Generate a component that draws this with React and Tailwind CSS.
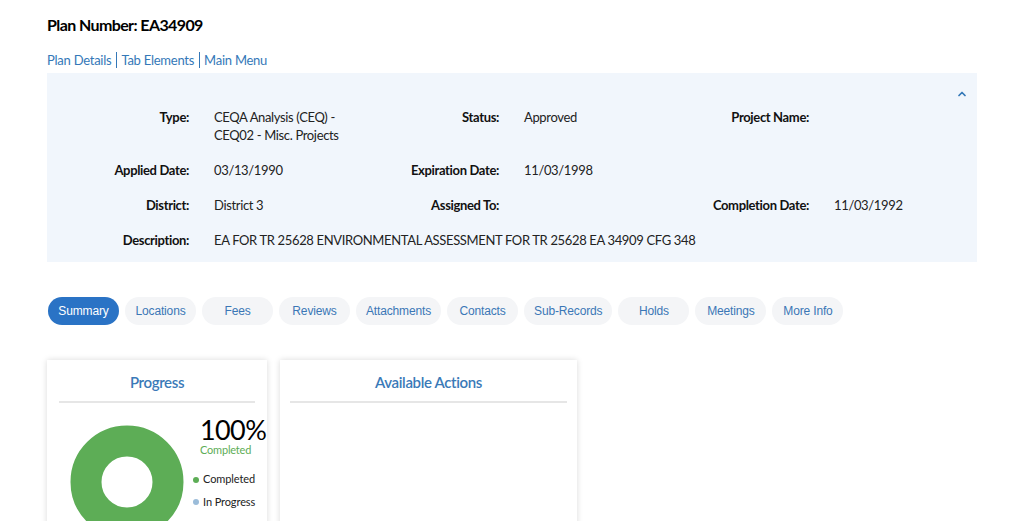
import React from 'react';
import { ChevronUp } from 'lucide-react';

const fields = [
  [
    { label: 'Type:', value: ['CEQA Analysis (CEQ) -', 'CEQ02 - Misc. Projects'] },
    { label: 'Status:', value: ['Approved'] },
    { label: 'Project Name:', value: [] },
  ],
  [
    { label: 'Applied Date:', value: ['03/13/1990'] },
    { label: 'Expiration Date:', value: ['11/03/1998'] },
    { label: '', value: [] },
  ],
  [
    { label: 'District:', value: ['District 3'] },
    { label: 'Assigned To:', value: [] },
    { label: 'Completion Date:', value: ['11/03/1992'] },
  ],
];

const tabs = ['Summary', 'Locations', 'Fees', 'Reviews', 'Attachments', 'Contacts', 'Sub-Records', 'Holds', 'Meetings', 'More Info'];

const Donut = () => (
  <svg width="114" height="114" viewBox="0 0 114 114">
    <circle cx="57" cy="57" r="41" fill="none" stroke="#5dad56" strokeWidth="31" />
  </svg>
);

export default function App() {
  return (
    <div className="min-h-screen bg-white px-[47px] text-[13px] tracking-[-0.35px] text-[#222] font-['Lato','Liberation_Sans',sans-serif]">
      <h1 className="pt-[15px] text-[16px] font-bold leading-[20px] tracking-[-0.6px] text-black">Plan Number: EA34909</h1>

      <div className="mt-[17px] flex items-center text-[13px] leading-[16px] tracking-[-0.25px] text-[#3478b8]">
        <span className="pr-[5px]">Plan Details</span>
        <span className="border-l border-[#3478b8] pl-[4px] pr-[5px]">Tab Elements</span>
        <span className="border-l border-[#3478b8] pl-[4px]">Main Menu</span>
      </div>

      <div className="relative mt-[5px] h-[189px] w-[930px] bg-[#f1f6fc] pt-[35px]">
        <ChevronUp className="absolute right-[9px] top-[15px] h-[12px] w-[12px] text-[#3478b8]" strokeWidth={3.5} />
        {fields.map((row, i) => (
          <div key={i} className="mb-[17px] grid grid-cols-[repeat(6,155px)] leading-[18px]">
            {row.map((f, j) => (
              <React.Fragment key={j}>
                <div className="pr-[13px] text-right font-bold text-[#111]">{f.label}</div>
                <div className="pl-[12px] text-[#222]">
                  {f.value.map((v) => (
                    <div key={v}>{v}</div>
                  ))}
                </div>
              </React.Fragment>
            ))}
          </div>
        ))}
        <div className="grid grid-cols-[155px_1fr] leading-[18px]">
          <div className="pr-[13px] text-right font-bold text-[#111]">Description:</div>
          <div className="pl-[12px]">EA FOR TR 25628 ENVIRONMENTAL ASSESSMENT FOR TR 25628 EA 34909 CFG 348</div>
        </div>
      </div>

      <div className="mt-[35px] flex gap-[6px] pl-px font-['Liberation_Sans',Arial,sans-serif] text-[12px] tracking-[-0.15px]">
        {tabs.map((t, i) => (
          <div
            key={t}
            className={`flex h-[28px] min-w-[71px] items-center justify-center rounded-full px-[10px] ${
              i === 0 ? 'bg-[#2a73c5] text-white' : 'bg-[#f4f5f7] text-[#3b77b6]'
            }`}
          >
            {t}
          </div>
        ))}
      </div>

      <div className="mt-[35px] flex gap-[13px]">
        <div className="h-[200px] w-[220px] bg-white px-[12px] shadow-[0_0_6px_rgba(0,0,0,0.15)]">
          <div className="border-b-2 border-[#e6e6e6] pb-[10px] pt-[13px] text-center text-[15px] font-semibold leading-[18px] text-[#3a7ab8]">
            Progress
          </div>
          <div className="flex">
            <div className="ml-[11px] mt-[22px] shrink-0">
              <Donut />
            </div>
            <div className="ml-[16px] mt-[13px]">
              <div className="text-[27px] leading-[28px] tracking-[-0.6px] text-black">100%</div>
              <div className="text-[11px] leading-[12px] tracking-[-0.2px] text-[#5dad56]">Completed</div>
              <div className="-ml-[7px] mt-[16px] flex items-center gap-[4px] text-[11px] leading-[14px] tracking-[-0.1px] text-[#222]">
                <span className="mt-[2px] h-[6px] w-[6px] rounded-full bg-[#5dad56]"></span>
                Completed
              </div>
              <div className="-ml-[7px] mt-[9px] flex items-center gap-[4px] text-[11px] leading-[14px] tracking-[-0.1px] text-[#222]">
                <span className="h-[6px] w-[6px] rounded-full bg-[#9bbcd9]"></span>
                In Progress
              </div>
            </div>
          </div>
        </div>

        <div className="h-[200px] w-[297px] bg-white px-[10px] shadow-[0_0_6px_rgba(0,0,0,0.15)]">
          <div className="border-b-2 border-[#e6e6e6] pb-[10px] pt-[13px] text-center text-[15px] font-semibold leading-[18px] text-[#3a7ab8]">
            Available Actions
          </div>
        </div>
      </div>
    </div>
  );
}
